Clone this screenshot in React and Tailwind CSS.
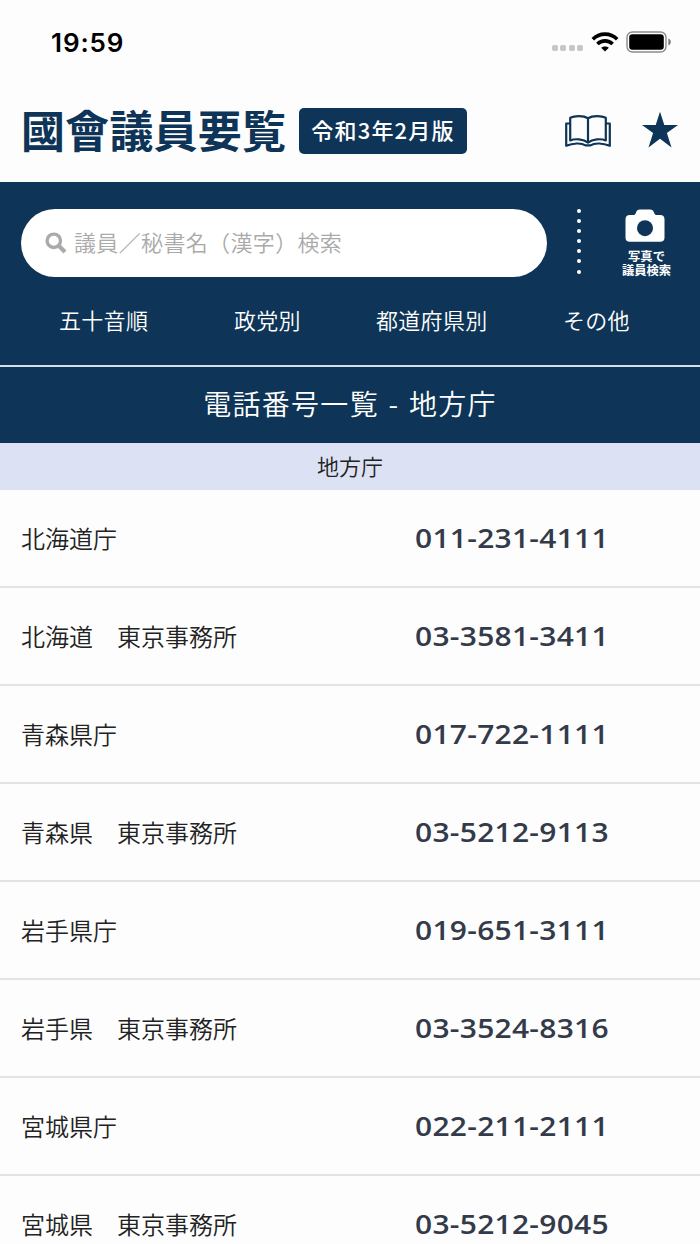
import React from "react";

const navItems = [
  { label: "五十音順", cls: "w-[90px] ml-[59px]" },
  { label: "政党別", cls: "w-[68px] ml-[85px]" },
  { label: "都道府県別", cls: "w-[113px] ml-[74px]" },
  { label: "その他", cls: "w-[68px] ml-[74px]" },
];

const offices = [
  { name: "北海道庁", tel: "011-231-4111" },
  { name: "北海道　東京事務所", tel: "03-3581-3411" },
  { name: "青森県庁", tel: "017-722-1111" },
  { name: "青森県　東京事務所", tel: "03-5212-9113" },
  { name: "岩手県庁", tel: "019-651-3111" },
  { name: "岩手県　東京事務所", tel: "03-3524-8316" },
  { name: "宮城県庁", tel: "022-211-2111" },
  { name: "宮城県　東京事務所", tel: "03-5212-9045" },
];

const WifiIcon = () => (
  <svg width="28" height="20" viewBox="0 0 28 20" fill="none" stroke="#000" strokeWidth="3.6">
    <path d="M1.8 7.2C8.5 .4 19.5 .4 26.2 7.2" />
    <path d="M6.4 12C10.6 7.8 17.4 7.8 21.6 12" />
    <path d="M14 19.6L10.2 15.8C12.3 13.9 15.7 13.9 17.8 15.8Z" fill="#000" stroke="none" />
  </svg>
);

const BatteryIcon = () => (
  <svg width="46" height="22" viewBox="0 0 46 22">
    <rect x="1" y="1" width="39" height="20" rx="5.5" fill="none" stroke="#8c8c8c" strokeWidth="1.4" />
    <rect x="3.2" y="3.2" width="34.6" height="15.6" rx="3.2" fill="#000" />
    <path d="M42.4 7.6C45.6 8.8 45.6 13.2 42.4 14.4Z" fill="#777" />
  </svg>
);

const BookIcon = () => (
  <svg width="48" height="34" viewBox="0 0 48 34" fill="none" stroke="#0e3557" strokeWidth="2.2" strokeLinejoin="round">
    <path d="M24 4.2C19.5 1.4 10.5 1.4 6.2 3.8V26.4C11 24.4 19.5 25 24 28.6C28.5 25 37 24.4 41.8 26.4V3.8C37.5 1.4 28.5 1.4 24 4.2V28.6" />
    <path d="M6 9.5H2.2V31.8C9 29 17.5 28.6 21.5 31.4H26.5C30.5 28.6 39 29 45.8 31.8V9.5H42" />
  </svg>
);

const StarIcon = () => (
  <svg width="38" height="38" viewBox="0 0 38 38" fill="#0e3557">
    <path d="M19 .8L23.3 14H37L25.9 22.1L30.5 36.5L19 27.7L7.5 36.5L12.1 22.1L1 14H14.7Z" />
  </svg>
);

const SearchIcon = () => (
  <svg width="22" height="22" viewBox="0 0 22 22" fill="none" stroke="#aaa">
    <circle cx="8.8" cy="8.8" r="6.7" strokeWidth="3.4" />
    <path d="M13.8 13.8L20 20" strokeWidth="4.2" />
  </svg>
);

const CameraIcon = () => (
  <svg width="40" height="33" viewBox="0 0 40 33">
    <path
      d="M5 6H8.5C10 6 10.3 5.3 10.8 4C11.8 1.3 12.6 .5 15 .5H25C27.4 .5 28.2 1.3 29.2 4C29.7 5.3 30 6 31.5 6H35C38 6 39.5 7.5 39.5 10.2V28.8C39.5 31.5 38 32.8 35 32.8H5C2 32.8 .5 31.5 .5 28.8V10.2C.5 7.5 2 6 5 6Z"
      fill="#fff"
    />
    <circle cx="20" cy="19.2" r="8" fill="#0e3557" />
  </svg>
);

const StatusBar = () => (
  <div className="flex h-[84px] items-center justify-between pl-[51px] pr-[27px]">
    <span className="font-['Inter',sans-serif] text-[26px] font-semibold tracking-[0.9px] text-black">19:59</span>
    <div className="flex items-center">
      <div className="mt-3 mr-[8px] flex gap-[2.5px]">
        {[0, 1, 2, 3].map((dot) => (
          <span key={dot} className="size-[6px] rounded-[2px] bg-[#c6c6c6]" />
        ))}
      </div>
      <WifiIcon />
      <div className="ml-[7px] mr-px">
        <BatteryIcon />
      </div>
    </div>
  </div>
);

const Header = () => (
  <header className="flex h-[98px] items-start pl-[21px] text-[#0e3557]">
    <h1 className="mt-[13px] w-[278px] whitespace-nowrap text-[44px] leading-[64px] font-bold tracking-[0.2px]">國會議員要覧</h1>
    <span className="mt-[24px] flex h-[46px] w-[168px] items-center justify-center rounded-[5px] bg-[#0e3557] pb-[3px] text-[22px] font-medium tracking-[1.2px] whitespace-nowrap text-white">
      令和3年2月版
    </span>
    <div className="mt-[30px] ml-[97px]">
      <BookIcon />
    </div>
    <div className="mt-[27px] ml-[29px]">
      <StarIcon />
    </div>
  </header>
);

const SearchPanel = () => (
  <section className="h-[185px] border-b-2 border-[#d5dee6] bg-[#0e3557] text-white">
    <div className="flex pt-[27px] pl-[21px]">
      <div className="flex h-[68px] w-[526px] items-center rounded-full bg-white pl-[24px]">
        <SearchIcon />
        <span className="ml-[7px] pb-[3px] text-[22px] font-[350] tracking-[0.35px] text-[#aaa]">議員／秘書名（漢字）検索</span>
      </div>
      <div className="ml-[30px] flex flex-col gap-[6.1px]">
        {[0, 1, 2, 3, 4, 5, 6].map((dot) => (
          <span key={dot} className="size-[4px] shrink-0 rounded-full bg-white" />
        ))}
      </div>
      <div className="ml-[31px] flex w-[66px] flex-col items-center">
        <CameraIcon />
        <p className="mt-[8px] ml-[3px] text-center text-[12.3px] leading-[13.5px] font-bold whitespace-nowrap">
          写真で
          <br />
          議員検索
        </p>
      </div>
    </div>
    <nav className="mt-[26px] flex text-[22px] leading-[32px] font-[350] tracking-[0.3px]">
      {navItems.map((item) => (
        <span key={item.label} className={`whitespace-nowrap ${item.cls}`}>
          {item.label}
        </span>
      ))}
    </nav>
  </section>
);

const App = () => {
  return (
    <div className="h-[1244px] w-[700px] overflow-hidden bg-[#fdfdfd] font-['Noto_Sans_CJK_JP',sans-serif]">
      <StatusBar />
      <Header />
      <SearchPanel />

      {/* Page title */}
      <h2 className="flex h-[76px] items-center justify-center bg-[#0e3557] pb-[5px] text-[28px] font-[350] tracking-[1.3px] [word-spacing:2px] text-white">
        電話番号一覧 - 地方庁
      </h2>
      <div className="flex h-[47px] items-center justify-center bg-[#dce2f4] pb-[2px] text-[22px] font-[350] text-[#222]">地方庁</div>

      {/* Phone list */}
      <ul>
        {offices.map((office) => (
          <li key={office.name} className="flex h-[98px] items-center border-b-2 border-[#e3e3e3] pl-[21px]">
            <span className="w-[394px] text-[24px] font-[350] text-[#222]">{office.name}</span>
            <span className="origin-left scale-x-[1.13] pt-[2px] font-['Open_Sans',sans-serif] text-[26.5px] font-semibold tracking-[0.25px] text-[#333b4a]">
              {office.tel}
            </span>
          </li>
        ))}
      </ul>
    </div>
  );
};

export default App;
